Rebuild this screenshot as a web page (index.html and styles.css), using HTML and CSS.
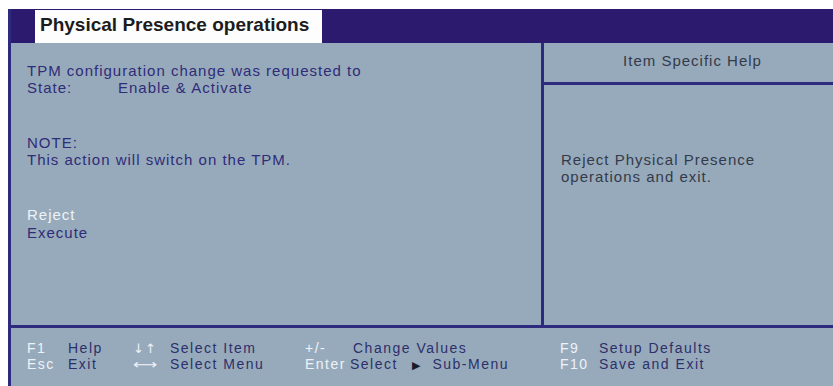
FILE: index.html
```html
<!DOCTYPE html>
<html lang="en">

<head>
    <meta charset="UTF-8">
    <title>Physical Presence operations</title>
    <link rel="stylesheet" href="styles.css">
</head>

<body>
    <div class="bios">
        <div class="titlebar">
            <div class="title-tab">Physical Presence operations</div>
        </div>
        <div class="main">
            <div class="left-panel">
                <p class="line">TPM configuration change was requested to</p>
                <p class="line"><span class="label">State:</span>Enable &amp; Activate</p>
                <p class="line note">NOTE:</p>
                <p class="line">This action will switch on the TPM.</p>
                <p class="line option selected">Reject</p>
                <p class="line option">Execute</p>
            </div>
            <div class="help-panel">
                <div class="help-title">Item Specific Help</div>
                <div class="help-text">Reject Physical Presence<br>operations and exit.</div>
            </div>
        </div>
        <div class="footer">
            <div class="keygroup g1">
                <div><span class="key k1">F1</span>Help</div>
                <div><span class="key k1">Esc</span>Exit</div>
            </div>
            <div class="keygroup g2">
                <div><span class="key k2 arrow">↓↑</span>Select Item</div>
                <div><span class="key k2 arrow wide">⟷</span>Select Menu</div>
            </div>
            <div class="keygroup g3">
                <div><span class="key k3">+/-</span>Change Values</div>
                <div><span class="key k3b">Enter</span>Select<span class="tri">▶</span>Sub-Menu</div>
            </div>
            <div class="keygroup g4">
                <div><span class="key k4">F9</span>Setup Defaults</div>
                <div><span class="key k4">F10</span>Save and Exit</div>
            </div>
        </div>
    </div>
</body>

</html>
```

FILE: styles.css
```css
body {
    margin: 0;
    padding: 9px 0 0 8px;
    background-color: #fff;
    font-family: "Liberation Sans", Arial, sans-serif;
    font-size: 15px;
    letter-spacing: 1px;
}

.bios {
    height: 377px;
    display: flex;
    flex-direction: column;
    background-color: #97aabb;
    border-left: 3px solid #2e2a7e;
}

.titlebar {
    height: 34px;
    background-color: #2b1a6e;
    padding-left: 24px;
    display: flex;
    align-items: flex-end;
}

.title-tab {
    background-color: #fdfdfd;
    width: 282px;
    height: 33px;
    padding-left: 5px;
    font-size: 19px;
    font-weight: bold;
    letter-spacing: 0;
    color: #1c1c1c;
    line-height: 30px;
}

.main {
    display: flex;
    height: 282px;
    border-bottom: 3px solid #2e2a7e;
}

.left-panel {
    width: 514px;
    padding: 19px 0 0 16px;
    border-right: 3px solid #2e2a7e;
    color: #2f2c78;
}

.line {
    margin: 0;
    line-height: 17px;
}

.label {
    display: inline-block;
    width: 91px;
}

.note {
    margin-top: 38px;
}

.selected {
    margin-top: 38px;
    color: #eef2f8;
}

.option {
    line-height: 18px;
}

.help-panel {
    flex: 1;
    display: flex;
    flex-direction: column;
}

.help-title {
    height: 39px;
    border-bottom: 3px solid #2e2a7e;
    text-align: center;
    color: #343a4a;
    line-height: 36px;
    padding-left: 8px;
}

.help-text {
    padding: 66px 0 0 17px;
    color: #343a4a;
    line-height: 17px;
}

.footer {
    display: flex;
    padding: 12px 0 0 16px;
    color: #2d2f6a;
    font-size: 14px;
    letter-spacing: 1.5px;
    line-height: 16px;
}

.key {
    display: inline-block;
    color: #eef2f8;
}

.arrow {
    font-family: "DejaVu Sans", sans-serif;
    font-size: 13px;
    letter-spacing: 1px;
    line-height: 15px;
}

.arrow.wide {
    transform-origin: left center;
    transform: scaleX(1.3);
}

.k1 {
    width: 41px;
}

.k2 {
    width: 37px;
}

.k3 {
    width: 48px;
}

.k3b {
    width: 45px;
}

.k4 {
    width: 39px;
}

.g1 {
    width: 106px;
}

.g2 {
    width: 172px;
}

.g3 {
    width: 255px;
}

.tri {
    font-family: "DejaVu Sans", sans-serif;
    font-size: 11px;
    letter-spacing: 0;
    line-height: 15px;
    color: #1a1a2a;
    margin: 0 12px 0 14px;
}
```
